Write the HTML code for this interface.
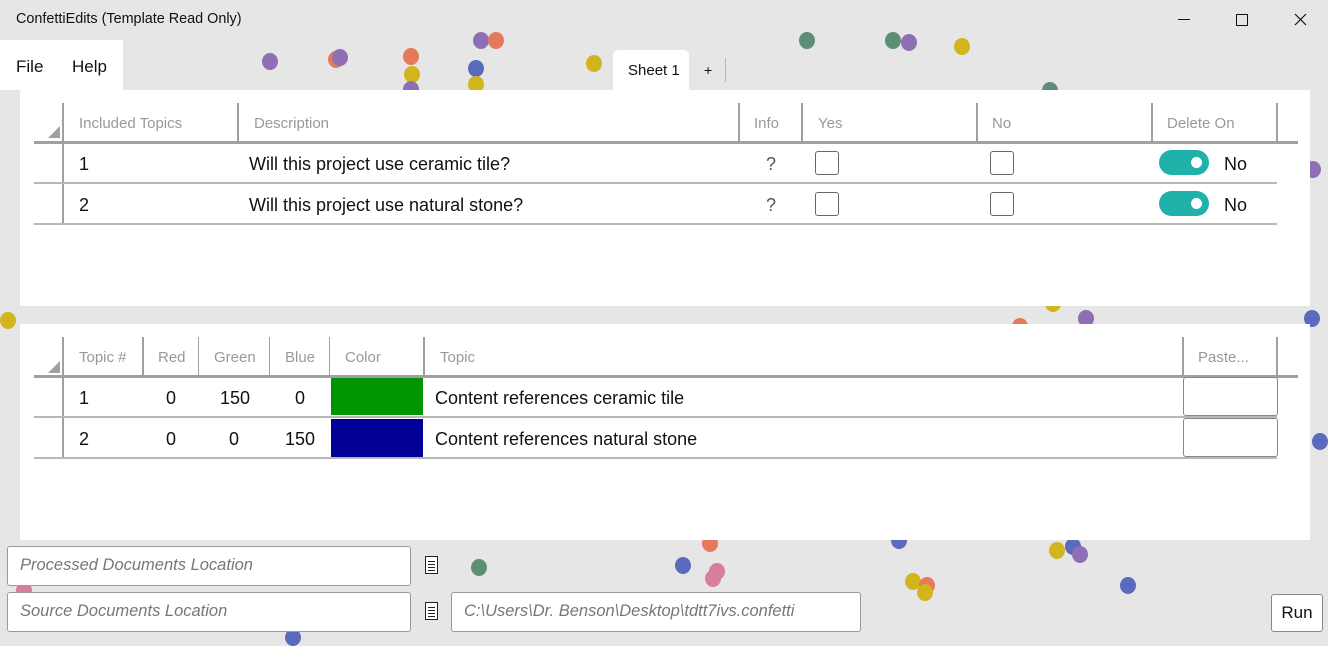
<!DOCTYPE html>
<html><head><meta charset="utf-8"><style>
*{margin:0;padding:0;box-sizing:border-box}
html,body{width:1328px;height:637px}
body{background:#e6e6e6;position:relative;overflow:hidden;font-family:"Liberation Sans",sans-serif;color:#111}
.a{position:absolute}
.d{position:absolute;width:16px;height:17px;border-radius:50%}
.p{background:#8e6fb5}.o{background:#e5795b}.y{background:#d2b51c}.b{background:#5a6abd}.g{background:#5d8f78}.k{background:#d97d9c}
.panel{position:absolute;background:#fff;left:20px;width:1290px}
.h{position:absolute;font-size:15px;color:#999;}
.t{position:absolute;font-size:18px;color:#111}
.vl{position:absolute;width:2px;background:#a0a0a0}
.hl{position:absolute;height:2px;background:#b8b8b8}
.cb{position:absolute;width:24px;height:24px;border:1.5px solid #666;border-radius:3px;background:#fff}
.tg{position:absolute;width:50px;height:25px;border-radius:13px;background:#20b2aa}
.tg:after{content:"";position:absolute;right:7px;top:7px;width:11px;height:11px;border-radius:50%;background:#fff}
.in{position:absolute;background:#fff;border:1px solid #999;border-radius:3px;font-style:italic;color:#777;font-size:16.5px;padding:9px 12px}
.doc{position:absolute;width:13px;height:18px;border:1.3px solid #222;background:#fff}
.doc i{position:absolute;left:2px;height:1px;background:#222;width:7px}
</style></head><body>
<div class="d p" style="left:262px;top:53px"></div>
<div class="d o" style="left:328px;top:51px"></div>
<div class="d p" style="left:332px;top:49px"></div>
<div class="d o" style="left:403px;top:48px"></div>
<div class="d y" style="left:404px;top:66px"></div>
<div class="d p" style="left:403px;top:81px"></div>
<div class="d b" style="left:468px;top:60px"></div>
<div class="d y" style="left:468px;top:76px"></div>
<div class="d p" style="left:473px;top:32px"></div>
<div class="d o" style="left:488px;top:32px"></div>
<div class="d y" style="left:586px;top:55px"></div>
<div class="d g" style="left:799px;top:32px"></div>
<div class="d g" style="left:885px;top:32px"></div>
<div class="d p" style="left:901px;top:34px"></div>
<div class="d y" style="left:954px;top:38px"></div>
<div class="d g" style="left:1042px;top:82px"></div>
<div class="d p" style="left:1305px;top:161px"></div>
<div class="d y" style="left:0px;top:312px"></div>
<div class="d y" style="left:1045px;top:295px"></div>
<div class="d p" style="left:1078px;top:310px"></div>
<div class="d o" style="left:1012px;top:318px"></div>
<div class="d b" style="left:1304px;top:310px"></div>
<div class="d b" style="left:1312px;top:433px"></div>
<div class="d o" style="left:702px;top:535px"></div>
<div class="d g" style="left:471px;top:559px"></div>
<div class="d b" style="left:675px;top:557px"></div>
<div class="d k" style="left:709px;top:563px"></div>
<div class="d k" style="left:705px;top:570px"></div>
<div class="d y" style="left:1049px;top:542px"></div>
<div class="d b" style="left:1065px;top:538px"></div>
<div class="d p" style="left:1072px;top:546px"></div>
<div class="d y" style="left:905px;top:573px"></div>
<div class="d o" style="left:919px;top:577px"></div>
<div class="d y" style="left:917px;top:584px"></div>
<div class="d b" style="left:1120px;top:577px"></div>
<div class="d k" style="left:16px;top:582px"></div>
<div class="d b" style="left:285px;top:629px"></div>
<div class="d b" style="left:891px;top:532px"></div>

<div class="a" style="left:16px;top:11px;font-size:14.4px">ConfettiEdits (Template Read Only)</div>
<div class="a" style="left:1178px;top:19px;width:12px;height:1px;background:#111"></div>
<div class="a" style="left:1236px;top:14px;width:12px;height:12px;border:1px solid #111"></div>
<svg class="a" style="left:1294px;top:13px" width="13" height="13"><path d="M1 1L12 12M12 1L1 12" stroke="#111" stroke-width="1.2"/></svg>

<div class="a" style="left:0;top:40px;width:123px;height:50px;background:#fff"></div>
<div class="a" style="left:16px;top:57px;font-size:17px">File</div>
<div class="a" style="left:72px;top:57px;font-size:17px">Help</div>
<div class="a" style="left:613px;top:50px;width:76px;height:42px;background:#fff;border-radius:5px 5px 0 0"></div>
<div class="a" style="left:628px;top:62px;font-size:15px">Sheet 1</div>
<div class="a" style="left:704px;top:62px;font-size:14px">+</div>
<div class="a" style="left:725px;top:58px;width:1px;height:24px;background:#bbb"></div>

<div class="panel" style="top:90px;height:216px"></div>
<svg class="a" style="left:48px;top:126px" width="12" height="12"><path d="M12 0L12 12L0 12Z" fill="#a0a0a0"/></svg>
<div class="vl" style="left:62px;top:103px;height:121px"></div>
<div class="vl" style="left:237px;top:103px;height:39px"></div>
<div class="vl" style="left:738px;top:103px;height:39px"></div>
<div class="vl" style="left:801px;top:103px;height:39px"></div>
<div class="vl" style="left:976px;top:103px;height:39px"></div>
<div class="vl" style="left:1151px;top:103px;height:39px"></div>
<div class="vl" style="left:1276px;top:103px;height:39px"></div>
<div class="a" style="left:34px;top:141px;width:1264px;height:3px;background:#a0a0a0"></div>
<div class="hl" style="left:34px;top:182px;width:1243px"></div>
<div class="hl" style="left:34px;top:223px;width:1243px"></div>
<div class="h" style="left:79px;top:115px">Included Topics</div>
<div class="h" style="left:254px;top:115px">Description</div>
<div class="h" style="left:754px;top:115px">Info</div>
<div class="h" style="left:818px;top:115px">Yes</div>
<div class="h" style="left:992px;top:115px">No</div>
<div class="h" style="left:1167px;top:115px">Delete On</div>
<div class="t" style="left:79px;top:154px">1</div>
<div class="t" style="left:249px;top:154px">Will this project use ceramic tile?</div>
<div class="t" style="left:766px;top:154px;color:#555">?</div>
<div class="cb" style="left:815px;top:151px"></div>
<div class="cb" style="left:990px;top:151px"></div>
<div class="tg" style="left:1159px;top:150px"></div>
<div class="t" style="left:1224px;top:154px">No</div>
<div class="t" style="left:79px;top:195px">2</div>
<div class="t" style="left:249px;top:195px">Will this project use natural stone?</div>
<div class="t" style="left:766px;top:195px;color:#555">?</div>
<div class="cb" style="left:815px;top:192px"></div>
<div class="cb" style="left:990px;top:192px"></div>
<div class="tg" style="left:1159px;top:191px"></div>
<div class="t" style="left:1224px;top:195px">No</div>

<div class="panel" style="top:324px;height:216px"></div>
<svg class="a" style="left:48px;top:361px" width="12" height="12"><path d="M12 0L12 12L0 12Z" fill="#a0a0a0"/></svg>
<div class="vl" style="left:62px;top:337px;height:121px"></div>
<div class="vl" style="left:142px;top:337px;height:39px"></div>
<div class="vl" style="left:198px;top:337px;height:39px;width:1px"></div>
<div class="vl" style="left:269px;top:337px;height:39px;width:1px"></div>
<div class="vl" style="left:329px;top:337px;height:39px;width:1px"></div>
<div class="vl" style="left:423px;top:337px;height:39px"></div>
<div class="vl" style="left:1182px;top:337px;height:39px"></div>
<div class="vl" style="left:1276px;top:337px;height:39px"></div>
<div class="a" style="left:34px;top:375px;width:1264px;height:3px;background:#a0a0a0"></div>
<div class="hl" style="left:34px;top:416px;width:1243px"></div>
<div class="hl" style="left:34px;top:457px;width:1243px"></div>
<div class="h" style="left:79px;top:349px">Topic #</div>
<div class="h" style="left:158px;top:349px">Red</div>
<div class="h" style="left:214px;top:349px">Green</div>
<div class="h" style="left:285px;top:349px">Blue</div>
<div class="h" style="left:345px;top:349px">Color</div>
<div class="h" style="left:440px;top:349px">Topic</div>
<div class="h" style="left:1198px;top:349px">Paste...</div>
<div class="t" style="left:79px;top:388px">1</div>
<div class="t" style="left:166px;top:388px">0</div>
<div class="t" style="left:220px;top:388px">150</div>
<div class="t" style="left:295px;top:388px">0</div>
<div class="a" style="left:331px;top:378px;width:92px;height:37px;background:#009400"></div>
<div class="t" style="left:435px;top:388px">Content references ceramic tile</div>
<div class="a" style="left:1183px;top:377px;width:95px;height:39px;border:1px solid #888;border-radius:3px;background:#fff"></div>
<div class="t" style="left:79px;top:429px">2</div>
<div class="t" style="left:166px;top:429px">0</div>
<div class="t" style="left:229px;top:429px">0</div>
<div class="t" style="left:285px;top:429px">150</div>
<div class="a" style="left:331px;top:419px;width:92px;height:38px;background:#000096"></div>
<div class="t" style="left:435px;top:429px">Content references natural stone</div>
<div class="a" style="left:1183px;top:418px;width:95px;height:39px;border:1px solid #888;border-radius:3px;background:#fff"></div>

<div class="in" style="left:7px;top:546px;width:404px;height:40px">Processed Documents Location</div>
<div class="in" style="left:7px;top:592px;width:404px;height:40px">Source Documents Location</div>
<div class="in" style="left:451px;top:592px;width:410px;height:40px">C:\Users\Dr. Benson\Desktop\tdtt7ivs.confetti</div>
<div class="doc" style="left:425px;top:556px"><i style="top:4px"></i><i style="top:7px"></i><i style="top:10px"></i><i style="top:13px"></i></div>
<div class="doc" style="left:425px;top:602px"><i style="top:4px"></i><i style="top:7px"></i><i style="top:10px"></i><i style="top:13px"></i></div>
<div class="a" style="left:1271px;top:594px;width:52px;height:38px;background:#fff;border:1px solid #888;border-radius:3px;font-size:17px;text-align:center;line-height:36px">Run</div>
</body></html>
